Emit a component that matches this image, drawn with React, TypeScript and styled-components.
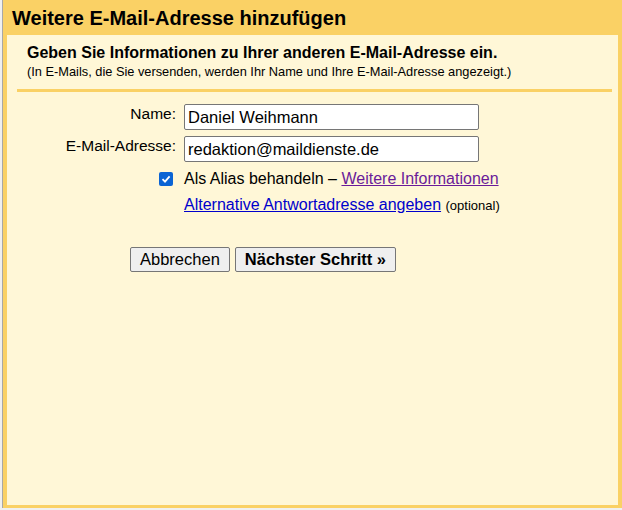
import * as React from 'react';
import styled, { createGlobalStyle } from 'styled-components';

const Global = createGlobalStyle`
  html, body { margin: 0; padding: 0; }
  body {
    background: #f0f0f0;
    font-family: "Liberation Sans", Arial, sans-serif;
    color: #000;
  }
`;

const Frame = styled.div`
  margin-left: 2px;
  width: 620px;
  height: 508px;
  box-sizing: border-box;
  border-left: 1px solid #a8a8a8;
  background: #fad165;
  display: flex;
  flex-direction: column;
  padding: 0 4px 3px 4px;
`;

const Title = styled.h1`
  margin: 0;
  height: 35px;
  display: flex;
  align-items: center;
  padding: 1px 0 0 5px;
  box-sizing: border-box;
  font-size: 20px;
  font-weight: bold;
`;

const Panel = styled.div`
  flex: 1;
  background: #fff7d7;
  padding: 8px 6px 0 10px;
`;

const Intro = styled.div`
  padding: 0 0 9px 10px;
  border-bottom: 3px solid #fad165;
`;

const Lead = styled.div`
  font-size: 16px;
  font-weight: bold;
  line-height: 20px;
`;

const Hint = styled.div`
  font-size: 12.8px;
  line-height: 16px;
  margin-top: 1px;
`;

const Form = styled.div`
  display: grid;
  grid-template-columns: 159px 295px;
  column-gap: 8px;
  row-gap: 6px;
  padding-top: 12px;
  font-size: 16px;
`;

const Label = styled.label`
  text-align: right;
  font-size: 15.5px;
  line-height: 20px;
`;

const Input = styled.input`
  box-sizing: border-box;
  width: 295px;
  height: 26px;
  border: 1px solid #767676;
  border-radius: 2px;
  padding: 0 3px;
  font-family: "Liberation Sans", Arial, sans-serif;
  font-size: 16.5px;
  background: #fff;
`;

const CheckCell = styled.div`
  display: flex;
  justify-content: flex-end;
  align-items: center;
  padding-right: 3px;
`;

const Check = styled.span`
  width: 14px;
  height: 14px;
  border-radius: 2px;
  background: #0b64d4;
  display: inline-flex;
  align-items: center;
  justify-content: center;
`;

const Line = styled.div<{ $lh: number }>`
  white-space: nowrap;
  line-height: ${p => p.$lh}px;
`;

const Link = styled.a<{ $visited?: boolean }>`
  color: ${p => (p.$visited ? '#6a1b9a' : '#0000cc')};
  text-decoration: underline;
  cursor: pointer;
`;

const Small = styled.span`
  font-size: 13px;
`;

const Buttons = styled.div`
  display: flex;
  gap: 5px;
  padding: 32px 0 0 113px;
`;

const Button = styled.button<{ $primary?: boolean }>`
  height: 25px;
  padding: 0 9px;
  font-family: "Liberation Sans", Arial, sans-serif;
  font-size: 16.5px;
  font-weight: ${p => (p.$primary ? 'bold' : 'normal')};
  background: #efefef;
  border: 1px solid #767676;
  border-radius: 2px;
  color: #000;
`;

export default function App() {
  return (
    <>
      <Global />
      <Frame>
        <Title>Weitere E-Mail-Adresse hinzufügen</Title>
        <Panel>
          <Intro>
            <Lead>Geben Sie Informationen zu Ihrer anderen E-Mail-Adresse ein.</Lead>
            <Hint>(In E-Mails, die Sie versenden, werden Ihr Name und Ihre E-Mail-Adresse angezeigt.)</Hint>
          </Intro>
          <Form>
            <Label>Name:</Label>
            <Input defaultValue="Daniel Weihmann" />
            <Label>E-Mail-Adresse:</Label>
            <Input defaultValue="redaktion@maildienste.de" />
            <CheckCell>
              <Check>
                <svg width="10" height="10" viewBox="0 0 10 10">
                  <path d="M1.5 5.2 L4 7.6 L8.6 2.4" fill="none" stroke="#fff" strokeWidth="1.8" />
                </svg>
              </Check>
            </CheckCell>
            <Line $lh={22}>
              Als Alias behandeln – <Link $visited>Weitere Informationen</Link>
            </Line>
            <span />
            <Line $lh={18}>
              <Link>Alternative Antwortadresse angeben</Link> <Small>(optional)</Small>
            </Line>
          </Form>
          <Buttons>
            <Button>Abbrechen</Button>
            <Button $primary>Nächster Schritt »</Button>
          </Buttons>
        </Panel>
      </Frame>
    </>
  );
}
